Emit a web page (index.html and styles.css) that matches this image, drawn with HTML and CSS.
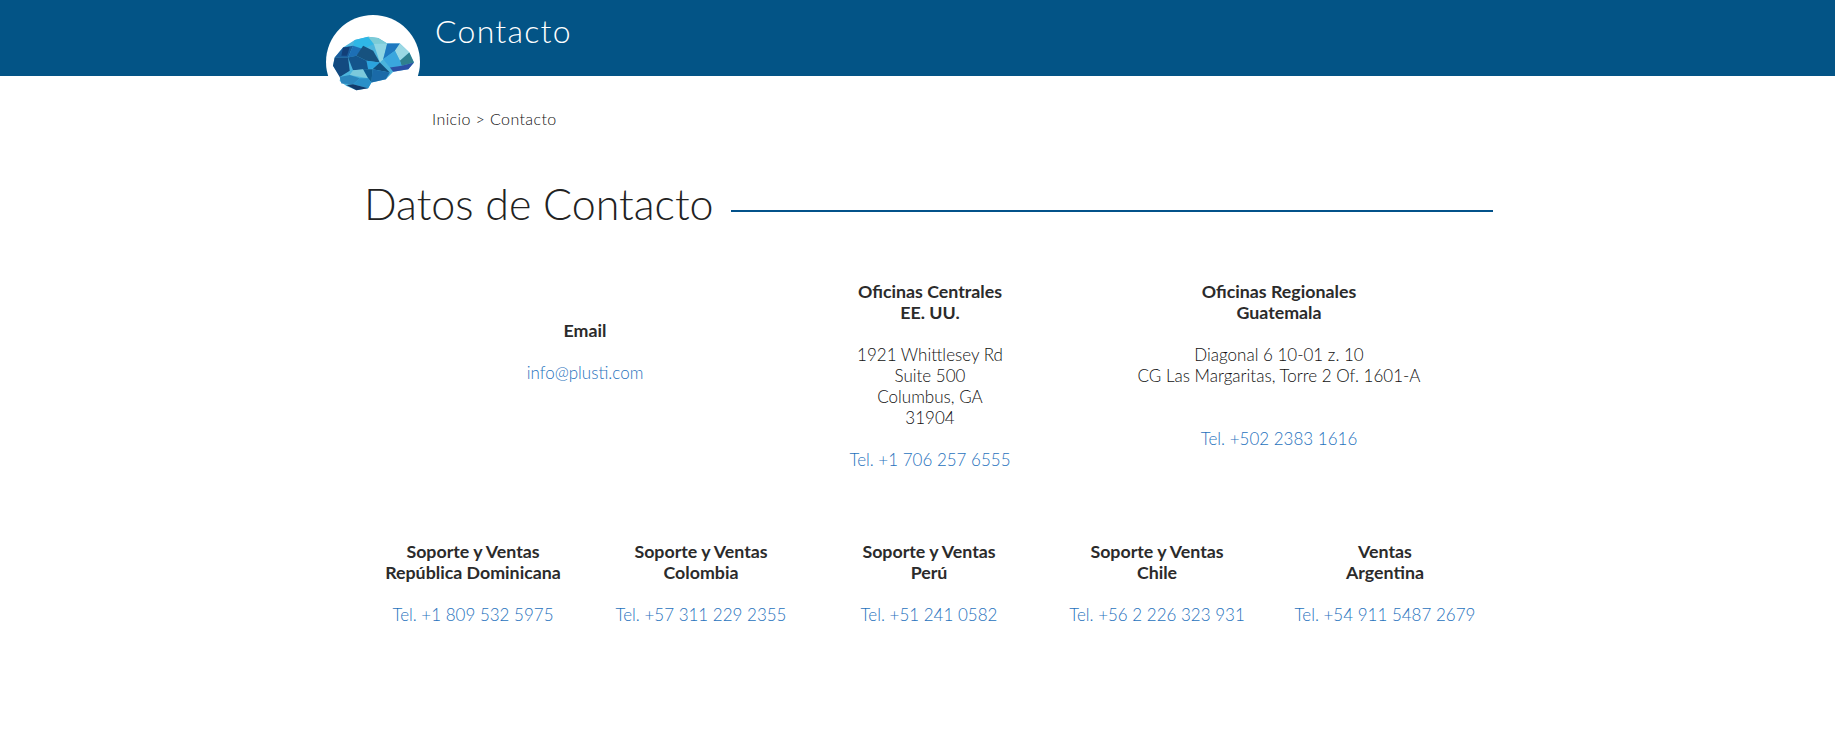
FILE: index.html
```html
<!DOCTYPE html>
<html lang="es">
<head>
<meta charset="utf-8">
<title>Contacto</title>
<link rel="stylesheet" href="styles.css">
</head>
<body>
<header class="topbar">
  <div class="logo">
    <svg class="brain" viewBox="100 100 245 170" width="82" height="57" aria-hidden="true">
      <polygon fill="#4cb4dc" points="130,140 165,118 205,108 235,112 262,128 300,128 328,155 342,185 325,205 280,213 258,235 215,245 205,262 170,268 140,255 120,240 122,228 100,195 105,170"/>
      <polygon fill="#2fb7e6" points="165,118 205,108 222,130 190,145 160,135"/>
      <polygon fill="#7ccbd6" points="205,108 235,112 262,128 232,132 222,130"/>
      <polygon fill="#1a5d9c" points="130,140 160,135 145,170 105,170"/>
      <polygon fill="#123f78" points="130,140 150,138 142,165 125,165"/>
      <polygon fill="#1d6fb5" points="160,135 190,145 170,165 145,170"/>
      <polygon fill="#17527f" points="190,135 220,150 240,185 200,180 170,165"/>
      <polygon fill="#8fd5e3" points="222,130 262,128 250,175 240,185"/>
      <polygon fill="#1e78c0" points="262,128 300,128 285,150 250,175"/>
      <polygon fill="#9bd8e4" points="300,128 328,155 300,180 285,150"/>
      <polygon fill="#2f7f8f" points="328,155 342,185 305,195 300,180"/>
      <polygon fill="#3aa6de" points="285,150 300,180 305,195 270,200 250,175"/>
      <polygon fill="#2b4fa5" points="305,195 342,185 325,205 280,213 270,200"/>
      <polygon fill="#2ba3dd" points="200,180 240,185 222,202 205,205"/>
      <polygon fill="#11507f" points="240,185 270,215 218,205"/>
      <polygon fill="#1a6aa8" points="218,205 270,215 258,235 215,245"/>
      <polygon fill="#134a80" points="105,170 145,170 150,210 120,228 100,195"/>
      <polygon fill="#14558c" points="145,170 170,165 200,180 205,205 160,208"/>
      <polygon fill="#7cc9dc" points="160,208 190,205 205,232 150,222"/>
      <polygon fill="#0f5a8e" points="190,205 218,205 215,245 205,232"/>
      <polygon fill="#2b86bd" points="120,228 150,222 180,232 160,250 125,248"/>
      <polygon fill="#2a90c8" points="180,232 205,232 215,245 205,262 160,250"/>
      <polygon fill="#123a6a" points="140,252 160,250 205,262 170,268"/>
    </svg>
  </div>
  <h1 class="page-title">Contacto</h1>
</header>
<nav class="breadcrumb">Inicio &gt; Contacto</nav>
<main class="content">
  <div class="heading-row">
    <h2 class="heading">Datos de Contacto</h2>
    <span class="heading-line"></span>
  </div>
  <section class="row-top">
    <div class="office office-email">
      <p><b>Email</b></p>
      <p><a>info@plusti.com</a></p>
    </div>
    <div class="office">
      <p><b>Oficinas Centrales<br>EE. UU.</b></p>
      <p>1921 Whittlesey Rd<br>Suite 500<br>Columbus, GA<br>31904</p>
      <p><a>Tel. +1 706 257 6555</a></p>
    </div>
    <div class="office">
      <p><b>Oficinas Regionales<br>Guatemala</b></p>
      <p>Diagonal 6 10-01 z. 10<br>CG Las Margaritas, Torre 2 Of. 1601-A<br>&nbsp;</p>
      <p><a>Tel. +502 2383 1616</a></p>
    </div>
  </section>
  <section class="row-bottom">
    <div class="office">
      <p><b>Soporte y Ventas<br>República Dominicana</b></p>
      <p><a>Tel. +1 809 532 5975</a></p>
    </div>
    <div class="office">
      <p><b>Soporte y Ventas<br>Colombia</b></p>
      <p><a>Tel. +57 311 229 2355</a></p>
    </div>
    <div class="office">
      <p><b>Soporte y Ventas<br>Perú</b></p>
      <p><a>Tel. +51 241 0582</a></p>
    </div>
    <div class="office">
      <p><b>Soporte y Ventas<br>Chile</b></p>
      <p><a>Tel. +56 2 226 323 931</a></p>
    </div>
    <div class="office">
      <p><b>Ventas<br>Argentina</b></p>
      <p><a>Tel. +54 911 5487 2679</a></p>
    </div>
  </section>
</main>
</body>
</html>
```
FILE: styles.css
```css
* { box-sizing: border-box; }
html, body { margin: 0; padding: 0; }
body {
  background: #fff;
  color: #111;
  font-family: Lato, "Liberation Sans", sans-serif;
  font-weight: 300;
  font-size: 17px;
  line-height: 21px;
  min-height: 735px;
}
.topbar {
  height: 76px;
  background: #035486;
  display: flex;
  align-items: flex-start;
  padding-left: 326px;
}
.logo {
  width: 94px;
  height: 94px;
  margin-top: 15px;
  border-radius: 50%;
  background: #fff;
  flex: none;
  display: flex;
  justify-content: flex-start;
}
.brain {
  margin: 19px 0 0 7px;
  flex: none;
}
.page-title {
  margin: 12px 0 0 15px;
  color: #fff;
  font-weight: 300;
  font-size: 32px;
  line-height: 38px;
  letter-spacing: 1.25px;
}
.breadcrumb {
  margin: 33px 0 0 432px;
  font-size: 16px;
  line-height: 20px;
  letter-spacing: 0.4px;
}
.content {
  margin-left: 359px;
  width: 1140px;
}
.heading-row {
  display: flex;
  align-items: center;
  margin-top: 48px;
  padding-left: 5px;
  width: 1134px;
}
.heading {
  margin: 0;
  font-weight: 300;
  font-size: 43px;
  line-height: 54px;
  flex: none;
  color: #222;
}
.heading-line {
  flex: 1;
  height: 2px;
  margin: 13px 0 0 17px;
  background: #03528a;
}
.row-top {
  display: grid;
  grid-template-columns: 452px 238px 460px;
  width: 1150px;
  margin-top: 50px;
  height: 260px;
}
.row-bottom {
  display: grid;
  grid-template-columns: repeat(5, 228px);
}
.office { text-align: center; }
.office-email { padding-top: 39px; }
.office p { margin: 0 0 21px; }
.office b { font-weight: 700; font-size: 17.8px; color: #2b2b2b; }
.office a { color: #1f72bd; }
```
